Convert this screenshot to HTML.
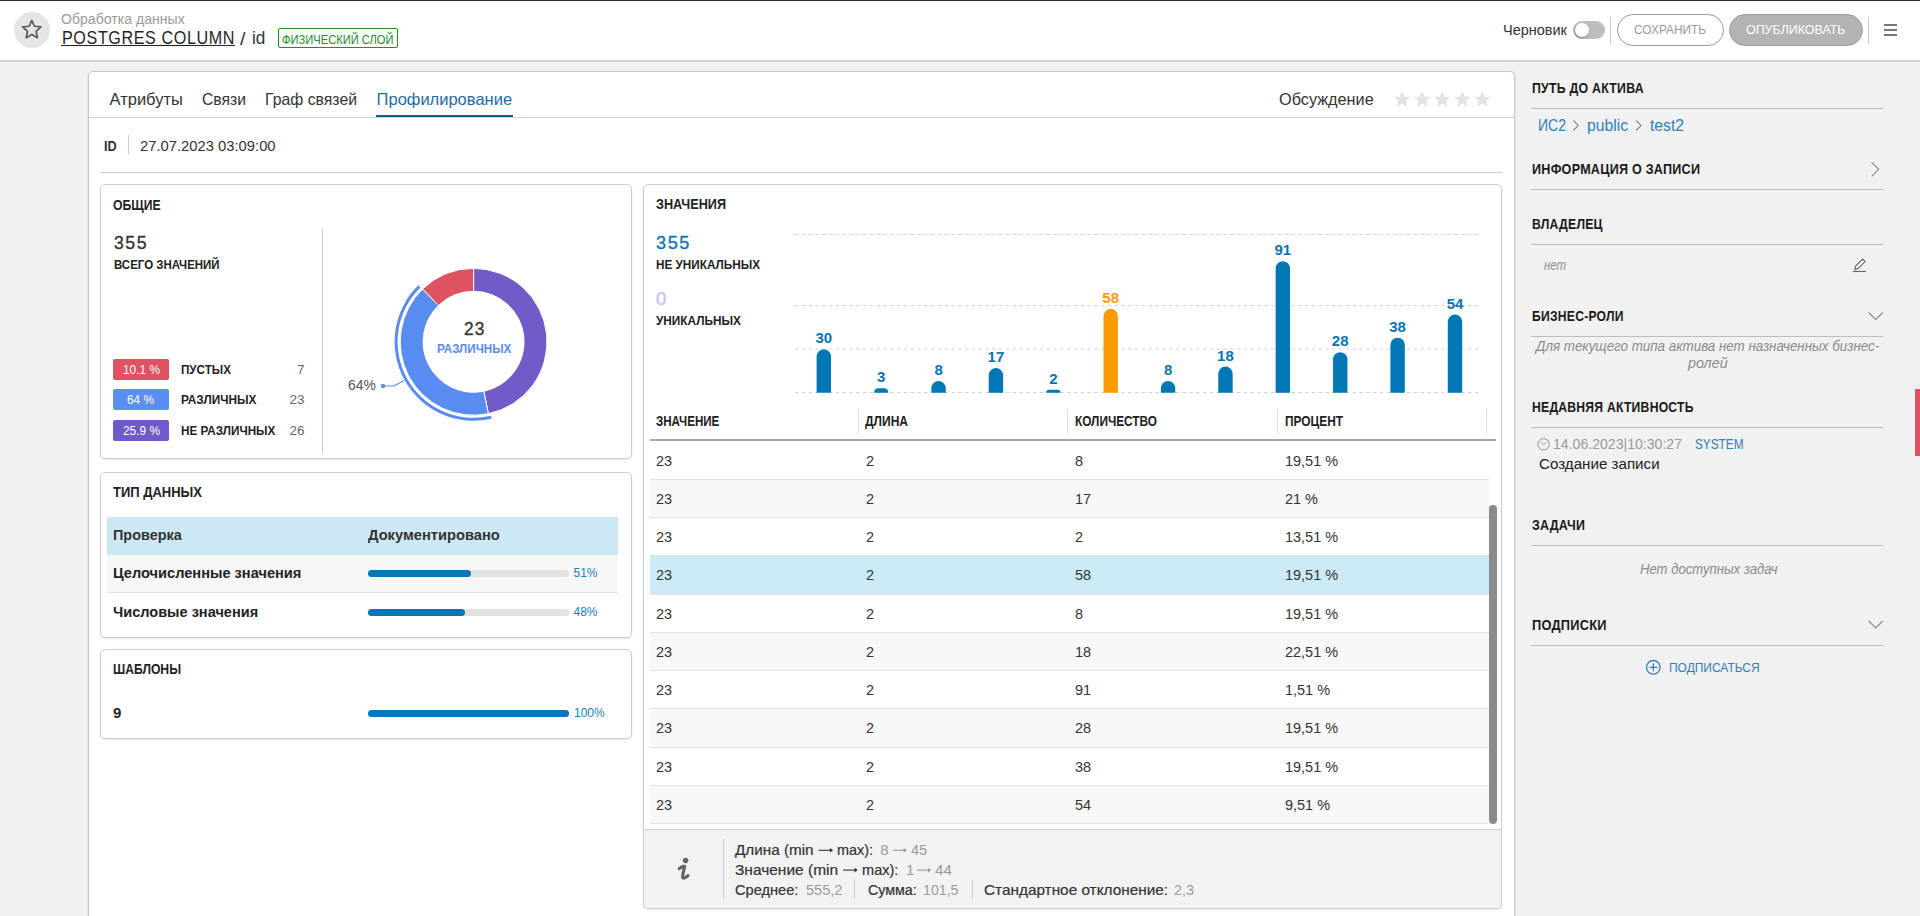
<!DOCTYPE html>
<html><head><meta charset="utf-8"><style>
html,body{margin:0;padding:0;width:1920px;height:916px;overflow:hidden;background:#f1f1f1;font-family:"Liberation Sans",sans-serif;}
.t{position:absolute;line-height:1;white-space:nowrap;transform-origin:0 0;}
.r{position:absolute;box-sizing:border-box;}
svg{position:absolute;overflow:visible;}
</style></head><body>
<div class="r" style="left:0px;top:0px;width:1920px;height:61px;background:#fff;border-top:1px solid #2b2b2b;"></div>
<div class="r" style="left:0px;top:60px;width:1920px;height:2px;background:#cfcfcf;"></div>
<svg style="left:0;top:0" width="70" height="60"><circle cx="32" cy="30" r="18" fill="#e5e5e5"/><path d="M31.80 20.30 L34.45 26.26 L40.93 26.93 L36.08 31.29 L37.44 37.67 L31.80 34.40 L26.16 37.67 L27.52 31.29 L22.67 26.93 L29.15 26.26 Z" fill="none" stroke="#5a5a5a" stroke-width="1.7" stroke-linejoin="round"/></svg>
<div class="t" style="left:61.25px;top:12.40px;font-size:14px;color:#9a9a9a;font-weight:normal;font-style:normal;transform:scaleX(1.0061);">Обработка данных</div>
<div class="t" style="left:61.50px;top:28.59px;font-size:18.5px;color:#1f1f1f;font-weight:normal;font-style:normal;transform:scaleX(0.8717);letter-spacing:0.7px;">POSTGRES COLUMN</div>
<div class="r" style="left:61px;top:44.5px;width:173.5px;height:1.6px;background:#222;"></div>
<div class="t" style="left:240.30px;top:29.74px;font-size:18.5px;color:#333;font-weight:normal;font-style:normal;transform:scaleX(1.0680);">/</div>
<div class="t" style="left:252.00px;top:29.34px;font-size:18.5px;color:#333;font-weight:normal;font-style:normal;transform:scaleX(0.9306);">id</div>
<div class="r" style="left:278px;top:28px;width:120px;height:20px;border:1.3px solid #1e8c2a;border-radius:2px;"></div>
<div class="t" style="left:282.00px;top:33.84px;font-size:12px;color:#23892f;font-weight:normal;font-style:normal;transform:scaleX(0.9296);">ФИЗИЧЕСКИЙ СЛОЙ</div>
<div class="t" style="left:1503.00px;top:22.30px;font-size:15px;color:#333;font-weight:normal;font-style:normal;transform:scaleX(0.9653);">Черновик</div>
<div class="r" style="left:1573px;top:20.8px;width:32px;height:17.8px;background:#bdbdbd;border-radius:9px;"></div>
<div class="r" style="left:1575.3px;top:22.6px;width:14.2px;height:14.2px;border-radius:50%;background:#fff;box-shadow:-0.5px 1px 2px rgba(0,0,0,.35);"></div>
<div class="r" style="left:1610px;top:17px;width:1px;height:26.7px;background:#c8c8c8;"></div>
<div class="r" style="left:1617px;top:14px;width:107px;height:32px;border:1px solid #9a9a9a;border-radius:16px;background:#fff;"></div>
<div class="t" style="left:1634.00px;top:23.07px;font-size:13.5px;color:#9a9a9a;font-weight:normal;font-style:normal;transform:scaleX(0.8780);">СОХРАНИТЬ</div>
<div class="r" style="left:1729px;top:14px;width:134px;height:32px;background:#b3b3b3;border:1px solid #9c9c9c;border-radius:16px;"></div>
<div class="t" style="left:1746.00px;top:23.07px;font-size:13.5px;color:#fff;font-weight:normal;font-style:normal;transform:scaleX(0.9209);">ОПУБЛИКОВАТЬ</div>
<div class="r" style="left:1867.8px;top:17px;width:1px;height:26.7px;background:#c8c8c8;"></div>
<div class="r" style="left:1883.5px;top:24px;width:13.5px;height:1.6px;background:#767676;"></div>
<div class="r" style="left:1883.5px;top:29px;width:13.5px;height:1.6px;background:#767676;"></div>
<div class="r" style="left:1883.5px;top:34px;width:13.5px;height:1.6px;background:#767676;"></div>
<div class="r" style="left:88px;top:71px;width:1427px;height:900px;background:#fff;border:1px solid #c9c9c9;border-radius:5px;box-shadow:0 1px 3px rgba(0,0,0,.12);"></div>
<div class="t" style="left:109.50px;top:91.03px;font-size:16.5px;color:#333;font-weight:normal;font-style:normal;">Атрибуты</div>
<div class="t" style="left:202.00px;top:91.03px;font-size:16.5px;color:#333;font-weight:normal;font-style:normal;transform:scaleX(0.9524);">Связи</div>
<div class="t" style="left:265.20px;top:91.03px;font-size:16.5px;color:#333;font-weight:normal;font-style:normal;transform:scaleX(0.9578);">Граф связей</div>
<div class="t" style="left:376.60px;top:91.03px;font-size:16.5px;color:#1f6ba6;font-weight:normal;font-style:normal;">Профилирование</div>
<div class="r" style="left:89px;top:117px;width:1425px;height:1px;background:#cfcfcf;"></div>
<div class="r" style="left:376px;top:114.6px;width:137px;height:2.5px;background:#0f5e95;"></div>
<div class="t" style="left:1279.40px;top:91.03px;font-size:16.5px;color:#333;font-weight:normal;font-style:normal;transform:scaleX(0.9849);">Обсуждение</div>
<svg style="left:1380px;top:85px" width="120" height="30"><path transform="translate(22.0,14.5)" d="M0 -8.6 L2.4 -2.8 L8.3 -2.7 L3.8 1.3 L5.3 7.5 L0 4.1 L-5.3 7.5 L-3.8 1.3 L-8.3 -2.7 L-2.4 -2.8 Z" fill="#e3e3e3"/><path transform="translate(42.1,14.5)" d="M0 -8.6 L2.4 -2.8 L8.3 -2.7 L3.8 1.3 L5.3 7.5 L0 4.1 L-5.3 7.5 L-3.8 1.3 L-8.3 -2.7 L-2.4 -2.8 Z" fill="#e3e3e3"/><path transform="translate(62.2,14.5)" d="M0 -8.6 L2.4 -2.8 L8.3 -2.7 L3.8 1.3 L5.3 7.5 L0 4.1 L-5.3 7.5 L-3.8 1.3 L-8.3 -2.7 L-2.4 -2.8 Z" fill="#e3e3e3"/><path transform="translate(82.30000000000001,14.5)" d="M0 -8.6 L2.4 -2.8 L8.3 -2.7 L3.8 1.3 L5.3 7.5 L0 4.1 L-5.3 7.5 L-3.8 1.3 L-8.3 -2.7 L-2.4 -2.8 Z" fill="#e3e3e3"/><path transform="translate(102.4,14.5)" d="M0 -8.6 L2.4 -2.8 L8.3 -2.7 L3.8 1.3 L5.3 7.5 L0 4.1 L-5.3 7.5 L-3.8 1.3 L-8.3 -2.7 L-2.4 -2.8 Z" fill="#e3e3e3"/></svg>
<div class="t" style="left:103.50px;top:137.80px;font-size:15px;color:#333;font-weight:bold;font-style:normal;transform:scaleX(0.8467);">ID</div>
<div class="r" style="left:128px;top:135px;width:1px;height:20px;background:#cfcfcf;"></div>
<div class="t" style="left:140.40px;top:137.80px;font-size:15px;color:#333;font-weight:normal;font-style:normal;transform:scaleX(0.9851);">27.07.2023 03:09:00</div>
<div class="r" style="left:100px;top:172px;width:1402px;height:1px;background:#cfcfcf;"></div>
<div class="r" style="left:100px;top:184px;width:532px;height:275px;background:#fff;border:1px solid #cdcdcd;border-radius:5px;box-shadow:0 1px 2px rgba(0,0,0,.10);"></div>
<div class="t" style="left:113.00px;top:197.08px;font-size:15.5px;color:#222;font-weight:bold;font-style:normal;transform:scaleX(0.7858);">ОБЩИЕ</div>
<div class="t" style="left:113.50px;top:233.74px;font-size:18.5px;color:#333;font-weight:normal;font-style:normal;transform:scaleX(0.9545);-webkit-text-stroke:0.35px #333;letter-spacing:1.6px;">355</div>
<div class="t" style="left:113.50px;top:258.32px;font-size:13.5px;color:#222;font-weight:bold;font-style:normal;transform:scaleX(0.8496);">ВСЕГО ЗНАЧЕНИЙ</div>
<div class="r" style="left:322px;top:229px;width:1px;height:225px;background:#cfcfcf;"></div>
<div class="r" style="left:113px;top:359px;width:56px;height:21px;background:#e05262;border-radius:2px;"></div>
<div class="t" style="left:122.52px;top:363.99px;font-size:12.3px;color:#fff;font-weight:normal;font-style:normal;transform:scaleX(0.9649);">10.1 %</div>
<div class="t" style="left:180.60px;top:362.67px;font-size:13.5px;color:#222;font-weight:bold;font-style:normal;transform:scaleX(0.8621);">ПУСТЫХ</div>
<div class="t" style="left:296.90px;top:362.67px;font-size:13.5px;color:#666;font-weight:normal;font-style:normal;">7</div>
<div class="r" style="left:113px;top:389px;width:56px;height:21px;background:#5a8ef0;border-radius:2px;"></div>
<div class="t" style="left:127.46px;top:393.99px;font-size:12.3px;color:#fff;font-weight:normal;font-style:normal;transform:scaleX(0.9652);">64 %</div>
<div class="t" style="left:180.60px;top:392.67px;font-size:13.5px;color:#222;font-weight:bold;font-style:normal;transform:scaleX(0.8737);">РАЗЛИЧНЫХ</div>
<div class="t" style="left:289.40px;top:392.67px;font-size:13.5px;color:#666;font-weight:normal;font-style:normal;">23</div>
<div class="r" style="left:113px;top:420px;width:56px;height:21px;background:#7059c8;border-radius:2px;"></div>
<div class="t" style="left:122.52px;top:424.99px;font-size:12.3px;color:#fff;font-weight:normal;font-style:normal;transform:scaleX(0.9649);">25.9 %</div>
<div class="t" style="left:180.60px;top:423.67px;font-size:13.5px;color:#222;font-weight:bold;font-style:normal;transform:scaleX(0.8672);">НЕ РАЗЛИЧНЫХ</div>
<div class="t" style="left:289.40px;top:423.67px;font-size:13.5px;color:#666;font-weight:normal;font-style:normal;">26</div>
<svg style="left:0;top:0" width="640" height="460"><path d="M473.60 268.40 A73.4 73.4 0 0 1 488.36 413.70 L483.75 391.27 A50.5 50.5 0 0 0 473.60 291.30 Z" fill="#715bc9" stroke="#fff" stroke-width="1"/><path d="M488.36 413.70 A73.4 73.4 0 0 1 422.61 289.00 L438.52 305.47 A50.5 50.5 0 0 0 483.75 391.27 Z" fill="#598cf0" stroke="#fff" stroke-width="1"/><path d="M422.61 289.00 A73.4 73.4 0 0 1 473.60 268.40 L473.60 291.30 A50.5 50.5 0 0 0 438.52 305.47 Z" fill="#de5261" stroke="#fff" stroke-width="1"/><path d="M491.64 418.71 A79 79 0 0 1 418.33 285.36 L420.43 287.50 A76 76 0 0 0 490.95 415.79 Z" fill="#598cf0" /><circle cx="383" cy="386" r="2.2" fill="#598cf0"/><path d="M383 386 L394 386 L404 380.5" fill="none" stroke="#598cf0" stroke-width="1.2"/></svg>
<div class="t" style="left:348.40px;top:377.73px;font-size:14.5px;color:#555;font-weight:normal;font-style:normal;transform:scaleX(0.9586);">64%</div>
<div class="t" style="left:463.50px;top:321.19px;font-size:17.5px;color:#333;font-weight:normal;font-style:normal;transform:scaleX(0.9879);-webkit-text-stroke:0.35px #333;letter-spacing:1.2px;">23</div>
<div class="t" style="left:436.50px;top:342.37px;font-size:13.5px;color:#598cf0;font-weight:bold;font-style:normal;transform:scaleX(0.8610);">РАЗЛИЧНЫХ</div>
<div class="r" style="left:100px;top:472px;width:532px;height:166px;background:#fff;border:1px solid #cdcdcd;border-radius:5px;box-shadow:0 1px 2px rgba(0,0,0,.10);"></div>
<div class="t" style="left:113.00px;top:483.68px;font-size:15.5px;color:#222;font-weight:bold;font-style:normal;transform:scaleX(0.8380);">ТИП ДАННЫХ</div>
<div class="r" style="left:107px;top:517px;width:511px;height:38px;background:#cde8f5;"></div>
<div class="t" style="left:113.00px;top:526.90px;font-size:15px;color:#333;font-weight:bold;font-style:normal;transform:scaleX(0.9609);">Проверка</div>
<div class="t" style="left:367.80px;top:526.90px;font-size:15px;color:#333;font-weight:bold;font-style:normal;transform:scaleX(0.9781);">Документировано</div>
<div class="r" style="left:107px;top:555px;width:511px;height:38px;background:#f7f7f7;border-bottom:1px solid #e3e3e3;"></div>
<div class="t" style="left:113.00px;top:565.30px;font-size:15px;color:#222;font-weight:bold;font-style:normal;transform:scaleX(0.9729);">Целочисленные значения</div>
<div class="r" style="left:368px;top:569.5px;width:201px;height:7px;background:#e2e2e2;border-radius:4px;"></div>
<div class="r" style="left:368px;top:569.5px;width:103px;height:7px;background:#0a76b7;border-radius:4px;"></div>
<div class="t" style="left:573.50px;top:566.84px;font-size:12px;color:#1c7dbd;font-weight:normal;font-style:normal;">51%</div>
<div class="t" style="left:113.00px;top:603.70px;font-size:15px;color:#222;font-weight:bold;font-style:normal;transform:scaleX(0.9693);">Числовые значения</div>
<div class="r" style="left:368px;top:609px;width:201px;height:7px;background:#e2e2e2;border-radius:4px;"></div>
<div class="r" style="left:368px;top:609px;width:97px;height:7px;background:#0a76b7;border-radius:4px;"></div>
<div class="t" style="left:573.50px;top:606.34px;font-size:12px;color:#1c7dbd;font-weight:normal;font-style:normal;">48%</div>
<div class="r" style="left:100px;top:649px;width:532px;height:90px;background:#fff;border:1px solid #cdcdcd;border-radius:5px;box-shadow:0 1px 2px rgba(0,0,0,.10);"></div>
<div class="t" style="left:113.00px;top:661.48px;font-size:15.5px;color:#222;font-weight:bold;font-style:normal;transform:scaleX(0.7834);">ШАБЛОНЫ</div>
<div class="t" style="left:113.00px;top:704.70px;font-size:15px;color:#222;font-weight:bold;font-style:normal;">9</div>
<div class="r" style="left:368px;top:709.5px;width:201px;height:7px;background:#0a76b7;border-radius:4px;"></div>
<div class="t" style="left:574.00px;top:706.84px;font-size:12px;color:#1c7dbd;font-weight:normal;font-style:normal;">100%</div>
<div class="r" style="left:643px;top:184px;width:859px;height:725px;background:#fff;border:1px solid #cdcdcd;border-radius:5px;box-shadow:0 1px 2px rgba(0,0,0,.10);overflow:hidden;"></div>
<div class="t" style="left:655.50px;top:196.38px;font-size:15.5px;color:#222;font-weight:bold;font-style:normal;transform:scaleX(0.8178);">ЗНАЧЕНИЯ</div>
<div class="t" style="left:655.50px;top:233.64px;font-size:18.5px;color:#0a76b7;font-weight:normal;font-style:normal;transform:scaleX(0.9780);-webkit-text-stroke:0.35px #0a76b7;letter-spacing:1.6px;">355</div>
<div class="t" style="left:655.50px;top:257.87px;font-size:13.5px;color:#222;font-weight:bold;font-style:normal;transform:scaleX(0.8692);">НЕ УНИКАЛЬНЫХ</div>
<div class="t" style="left:656.00px;top:289.64px;font-size:18.5px;color:#c9c5f2;font-weight:normal;font-style:normal;-webkit-text-stroke:0.5px #c9c5f2;">0</div>
<div class="t" style="left:655.50px;top:313.87px;font-size:13.5px;color:#222;font-weight:bold;font-style:normal;transform:scaleX(0.8739);">УНИКАЛЬНЫХ</div>
<svg style="left:0;top:0" width="1600" height="460"><line x1="795" y1="234.5" x2="1482" y2="234.5" stroke="#d2d2d2" stroke-width="1.2" stroke-dasharray="3.4 3.4"/><line x1="795" y1="305.5" x2="1482" y2="305.5" stroke="#d2d2d2" stroke-width="1.2" stroke-dasharray="3.4 3.4"/><line x1="795" y1="349" x2="1482" y2="349" stroke="#d2d2d2" stroke-width="1.2" stroke-dasharray="3.4 3.4"/><line x1="795" y1="392.5" x2="1482" y2="392.5" stroke="#d2d2d2" stroke-width="1.2" stroke-dasharray="3.4 3.4"/><path d="M816.60 392.8 L816.60 356.48 A7.20 7.20 0 0 1 823.80 349.28 L823.80 349.28 A7.20 7.20 0 0 1 831.00 356.48 L831.00 392.8 Z" fill="#0277b6"/><path d="M873.98 392.8 L873.98 392.60 A4.33 4.33 0 0 1 878.31 388.27 L884.05 388.27 A4.33 4.33 0 0 1 888.38 392.60 L888.38 392.8 Z" fill="#0277b6"/><path d="M931.36 392.8 L931.36 388.25 A7.20 7.20 0 0 1 938.56 381.05 L938.56 381.05 A7.20 7.20 0 0 1 945.76 388.25 L945.76 392.8 Z" fill="#0277b6"/><path d="M988.74 392.8 L988.74 375.25 A7.20 7.20 0 0 1 995.94 368.05 L995.94 368.05 A7.20 7.20 0 0 1 1003.14 375.25 L1003.14 392.8 Z" fill="#0277b6"/><path d="M1046.12 392.8 L1046.12 392.60 A2.89 2.89 0 0 1 1049.01 389.71 L1057.63 389.71 A2.89 2.89 0 0 1 1060.52 392.60 L1060.52 392.8 Z" fill="#0277b6"/><path d="M1103.50 392.8 L1103.50 316.05 A7.20 7.20 0 0 1 1110.70 308.85 L1110.70 308.85 A7.20 7.20 0 0 1 1117.90 316.05 L1117.90 392.8 Z" fill="#ff9a00"/><path d="M1160.88 392.8 L1160.88 388.25 A7.20 7.20 0 0 1 1168.08 381.05 L1168.08 381.05 A7.20 7.20 0 0 1 1175.28 388.25 L1175.28 392.8 Z" fill="#0277b6"/><path d="M1218.26 392.8 L1218.26 373.81 A7.20 7.20 0 0 1 1225.46 366.61 L1225.46 366.61 A7.20 7.20 0 0 1 1232.66 373.81 L1232.66 392.8 Z" fill="#0277b6"/><path d="M1275.64 392.8 L1275.64 268.40 A7.20 7.20 0 0 1 1282.84 261.20 L1282.84 261.20 A7.20 7.20 0 0 1 1290.04 268.40 L1290.04 392.8 Z" fill="#0277b6"/><path d="M1333.02 392.8 L1333.02 359.37 A7.20 7.20 0 0 1 1340.22 352.17 L1340.22 352.17 A7.20 7.20 0 0 1 1347.42 359.37 L1347.42 392.8 Z" fill="#0277b6"/><path d="M1390.40 392.8 L1390.40 344.93 A7.20 7.20 0 0 1 1397.60 337.73 L1397.60 337.73 A7.20 7.20 0 0 1 1404.80 344.93 L1404.80 392.8 Z" fill="#0277b6"/><path d="M1447.78 392.8 L1447.78 321.82 A7.20 7.20 0 0 1 1454.98 314.62 L1454.98 314.62 A7.20 7.20 0 0 1 1462.18 321.82 L1462.18 392.8 Z" fill="#0277b6"/></svg>
<div class="t" style="left:815.45px;top:330.38px;font-size:15px;color:#0a73b2;font-weight:bold;font-style:normal;">30</div>
<div class="t" style="left:877.00px;top:369.37px;font-size:15px;color:#0a73b2;font-weight:bold;font-style:normal;">3</div>
<div class="t" style="left:934.38px;top:362.15px;font-size:15px;color:#0a73b2;font-weight:bold;font-style:normal;">8</div>
<div class="t" style="left:987.59px;top:349.15px;font-size:15px;color:#0a73b2;font-weight:bold;font-style:normal;">17</div>
<div class="t" style="left:1049.14px;top:370.81px;font-size:15px;color:#0a73b2;font-weight:bold;font-style:normal;">2</div>
<div class="t" style="left:1102.35px;top:289.95px;font-size:15px;color:#ff9a00;font-weight:bold;font-style:normal;">58</div>
<div class="t" style="left:1163.90px;top:362.15px;font-size:15px;color:#0a73b2;font-weight:bold;font-style:normal;">8</div>
<div class="t" style="left:1217.11px;top:347.71px;font-size:15px;color:#0a73b2;font-weight:bold;font-style:normal;">18</div>
<div class="t" style="left:1274.49px;top:242.30px;font-size:15px;color:#0a73b2;font-weight:bold;font-style:normal;">91</div>
<div class="t" style="left:1331.87px;top:333.27px;font-size:15px;color:#0a73b2;font-weight:bold;font-style:normal;">28</div>
<div class="t" style="left:1389.25px;top:318.83px;font-size:15px;color:#0a73b2;font-weight:bold;font-style:normal;">38</div>
<div class="t" style="left:1446.63px;top:295.73px;font-size:15px;color:#0a73b2;font-weight:bold;font-style:normal;">54</div>
<div class="t" style="left:655.60px;top:413.73px;font-size:14.5px;color:#222;font-weight:bold;font-style:normal;transform:scaleX(0.7977);">ЗНАЧЕНИЕ</div>
<div class="t" style="left:865.00px;top:413.73px;font-size:14.5px;color:#222;font-weight:bold;font-style:normal;transform:scaleX(0.8293);">ДЛИНА</div>
<div class="t" style="left:1074.50px;top:413.73px;font-size:14.5px;color:#222;font-weight:bold;font-style:normal;transform:scaleX(0.8151);">КОЛИЧЕСТВО</div>
<div class="t" style="left:1284.50px;top:413.73px;font-size:14.5px;color:#222;font-weight:bold;font-style:normal;transform:scaleX(0.8198);">ПРОЦЕНТ</div>
<div class="r" style="left:857.5px;top:409px;width:1px;height:25px;background:#dedede;"></div>
<div class="r" style="left:1067px;top:409px;width:1px;height:25px;background:#dedede;"></div>
<div class="r" style="left:1276.5px;top:409px;width:1px;height:25px;background:#dedede;"></div>
<div class="r" style="left:1486px;top:409px;width:1px;height:25px;background:#dedede;"></div>
<div class="r" style="left:650px;top:438.8px;width:846px;height:2.3px;background:#a9a9a9;"></div>
<div class="r" style="left:650px;top:441.5px;width:839px;height:38.3px;background:#fff;"></div>
<div class="t" style="left:655.80px;top:452.90px;font-size:15px;color:#333;font-weight:normal;font-style:normal;transform:scaleX(0.9650);">23</div>
<div class="t" style="left:865.60px;top:452.90px;font-size:15px;color:#333;font-weight:normal;font-style:normal;transform:scaleX(0.9650);">2</div>
<div class="t" style="left:1074.70px;top:452.90px;font-size:15px;color:#333;font-weight:normal;font-style:normal;transform:scaleX(0.9650);">8</div>
<div class="t" style="left:1285.00px;top:452.90px;font-size:15px;color:#333;font-weight:normal;font-style:normal;transform:scaleX(0.9650);">19,51 %</div>
<div class="r" style="left:650px;top:479.4px;width:839px;height:38.4px;background:#f8f8f8;"></div>
<div class="t" style="left:655.80px;top:490.80px;font-size:15px;color:#333;font-weight:normal;font-style:normal;transform:scaleX(0.9650);">23</div>
<div class="t" style="left:865.60px;top:490.80px;font-size:15px;color:#333;font-weight:normal;font-style:normal;transform:scaleX(0.9650);">2</div>
<div class="t" style="left:1074.70px;top:490.80px;font-size:15px;color:#333;font-weight:normal;font-style:normal;transform:scaleX(0.9650);">17</div>
<div class="t" style="left:1285.00px;top:490.80px;font-size:15px;color:#333;font-weight:normal;font-style:normal;transform:scaleX(0.9650);">21 %</div>
<div class="r" style="left:650px;top:517.4px;width:839px;height:38.6px;background:#fff;"></div>
<div class="t" style="left:655.80px;top:528.80px;font-size:15px;color:#333;font-weight:normal;font-style:normal;transform:scaleX(0.9650);">23</div>
<div class="t" style="left:865.60px;top:528.80px;font-size:15px;color:#333;font-weight:normal;font-style:normal;transform:scaleX(0.9650);">2</div>
<div class="t" style="left:1074.70px;top:528.80px;font-size:15px;color:#333;font-weight:normal;font-style:normal;transform:scaleX(0.9650);">2</div>
<div class="t" style="left:1285.00px;top:528.80px;font-size:15px;color:#333;font-weight:normal;font-style:normal;transform:scaleX(0.9650);">13,51 %</div>
<div class="r" style="left:650px;top:555.6px;width:839px;height:39.1px;background:#cce9f6;"></div>
<div class="t" style="left:655.80px;top:567.00px;font-size:15px;color:#333;font-weight:normal;font-style:normal;transform:scaleX(0.9650);">23</div>
<div class="t" style="left:865.60px;top:567.00px;font-size:15px;color:#333;font-weight:normal;font-style:normal;transform:scaleX(0.9650);">2</div>
<div class="t" style="left:1074.70px;top:567.00px;font-size:15px;color:#333;font-weight:normal;font-style:normal;transform:scaleX(0.9650);">58</div>
<div class="t" style="left:1285.00px;top:567.00px;font-size:15px;color:#333;font-weight:normal;font-style:normal;transform:scaleX(0.9650);">19,51 %</div>
<div class="r" style="left:650px;top:594.3px;width:839px;height:38.4px;background:#fff;"></div>
<div class="t" style="left:655.80px;top:605.70px;font-size:15px;color:#333;font-weight:normal;font-style:normal;transform:scaleX(0.9650);">23</div>
<div class="t" style="left:865.60px;top:605.70px;font-size:15px;color:#333;font-weight:normal;font-style:normal;transform:scaleX(0.9650);">2</div>
<div class="t" style="left:1074.70px;top:605.70px;font-size:15px;color:#333;font-weight:normal;font-style:normal;transform:scaleX(0.9650);">8</div>
<div class="t" style="left:1285.00px;top:605.70px;font-size:15px;color:#333;font-weight:normal;font-style:normal;transform:scaleX(0.9650);">19,51 %</div>
<div class="r" style="left:650px;top:632.3px;width:839px;height:38.3px;background:#f8f8f8;"></div>
<div class="t" style="left:655.80px;top:643.70px;font-size:15px;color:#333;font-weight:normal;font-style:normal;transform:scaleX(0.9650);">23</div>
<div class="t" style="left:865.60px;top:643.70px;font-size:15px;color:#333;font-weight:normal;font-style:normal;transform:scaleX(0.9650);">2</div>
<div class="t" style="left:1074.70px;top:643.70px;font-size:15px;color:#333;font-weight:normal;font-style:normal;transform:scaleX(0.9650);">18</div>
<div class="t" style="left:1285.00px;top:643.70px;font-size:15px;color:#333;font-weight:normal;font-style:normal;transform:scaleX(0.9650);">22,51 %</div>
<div class="r" style="left:650px;top:670.2px;width:839px;height:38.3px;background:#fff;"></div>
<div class="t" style="left:655.80px;top:681.60px;font-size:15px;color:#333;font-weight:normal;font-style:normal;transform:scaleX(0.9650);">23</div>
<div class="t" style="left:865.60px;top:681.60px;font-size:15px;color:#333;font-weight:normal;font-style:normal;transform:scaleX(0.9650);">2</div>
<div class="t" style="left:1074.70px;top:681.60px;font-size:15px;color:#333;font-weight:normal;font-style:normal;transform:scaleX(0.9650);">91</div>
<div class="t" style="left:1285.00px;top:681.60px;font-size:15px;color:#333;font-weight:normal;font-style:normal;transform:scaleX(0.9650);">1,51 %</div>
<div class="r" style="left:650px;top:708.1px;width:839px;height:39.6px;background:#f8f8f8;"></div>
<div class="t" style="left:655.80px;top:719.50px;font-size:15px;color:#333;font-weight:normal;font-style:normal;transform:scaleX(0.9650);">23</div>
<div class="t" style="left:865.60px;top:719.50px;font-size:15px;color:#333;font-weight:normal;font-style:normal;transform:scaleX(0.9650);">2</div>
<div class="t" style="left:1074.70px;top:719.50px;font-size:15px;color:#333;font-weight:normal;font-style:normal;transform:scaleX(0.9650);">28</div>
<div class="t" style="left:1285.00px;top:719.50px;font-size:15px;color:#333;font-weight:normal;font-style:normal;transform:scaleX(0.9650);">19,51 %</div>
<div class="r" style="left:650px;top:747.3px;width:839px;height:38.6px;background:#fff;"></div>
<div class="t" style="left:655.80px;top:758.70px;font-size:15px;color:#333;font-weight:normal;font-style:normal;transform:scaleX(0.9650);">23</div>
<div class="t" style="left:865.60px;top:758.70px;font-size:15px;color:#333;font-weight:normal;font-style:normal;transform:scaleX(0.9650);">2</div>
<div class="t" style="left:1074.70px;top:758.70px;font-size:15px;color:#333;font-weight:normal;font-style:normal;transform:scaleX(0.9650);">38</div>
<div class="t" style="left:1285.00px;top:758.70px;font-size:15px;color:#333;font-weight:normal;font-style:normal;transform:scaleX(0.9650);">19,51 %</div>
<div class="r" style="left:650px;top:785.5px;width:839px;height:38.2px;background:#f8f8f8;"></div>
<div class="t" style="left:655.80px;top:796.90px;font-size:15px;color:#333;font-weight:normal;font-style:normal;transform:scaleX(0.9650);">23</div>
<div class="t" style="left:865.60px;top:796.90px;font-size:15px;color:#333;font-weight:normal;font-style:normal;transform:scaleX(0.9650);">2</div>
<div class="t" style="left:1074.70px;top:796.90px;font-size:15px;color:#333;font-weight:normal;font-style:normal;transform:scaleX(0.9650);">54</div>
<div class="t" style="left:1285.00px;top:796.90px;font-size:15px;color:#333;font-weight:normal;font-style:normal;transform:scaleX(0.9650);">9,51 %</div>
<div class="r" style="left:650px;top:478.9px;width:839px;height:1px;background:#e2e2e2;"></div>
<div class="r" style="left:650px;top:516.9px;width:839px;height:1px;background:#e2e2e2;"></div>
<div class="r" style="left:650px;top:555.1px;width:839px;height:1px;background:#e2e2e2;"></div>
<div class="r" style="left:650px;top:593.8px;width:839px;height:1px;background:#e2e2e2;"></div>
<div class="r" style="left:650px;top:631.8px;width:839px;height:1px;background:#e2e2e2;"></div>
<div class="r" style="left:650px;top:669.7px;width:839px;height:1px;background:#e2e2e2;"></div>
<div class="r" style="left:650px;top:707.6px;width:839px;height:1px;background:#e2e2e2;"></div>
<div class="r" style="left:650px;top:746.8px;width:839px;height:1px;background:#e2e2e2;"></div>
<div class="r" style="left:650px;top:785.0px;width:839px;height:1px;background:#e2e2e2;"></div>
<div class="r" style="left:650px;top:822.8px;width:839px;height:1px;background:#e2e2e2;"></div>
<div class="r" style="left:1489px;top:505px;width:7.5px;height:318.5px;background:#8a8a8a;border-radius:4px;"></div>
<div class="r" style="left:644px;top:829px;width:857px;height:79px;background:#f2f2f2;border-top:1px solid #cfcfcf;border-radius:0 0 5px 5px;"></div>
<svg style="left:0;top:0" width="760" height="916"><circle cx="685.6" cy="860.5" r="2.7" fill="#626262"/><path d="M679.2 868.6 Q681.6 866.2 684.6 866.4 L682.6 876 Q682.2 878.6 684.6 877.9 Q686.4 877.2 688 875.6" fill="none" stroke="#626262" stroke-width="3.1" stroke-linecap="round" stroke-linejoin="round"/></svg>
<div class="r" style="left:723px;top:839px;width:1px;height:60px;background:#cfcfcf;"></div>
<div class="t" style="left:735.30px;top:842.30px;font-size:15px;color:#333;font-weight:normal;font-style:normal;transform:scaleX(1.0175);-webkit-text-stroke:0.2px #333;">Длина (min</div>
<div class="t" style="left:837.30px;top:842.30px;font-size:15px;color:#333;font-weight:normal;font-style:normal;transform:scaleX(0.9600);-webkit-text-stroke:0.2px #333;">max):</div>
<div class="t" style="left:880.30px;top:842.30px;font-size:15px;color:#9a9a9a;font-weight:normal;font-style:normal;">8</div>
<div class="t" style="left:910.80px;top:842.30px;font-size:15px;color:#9a9a9a;font-weight:normal;font-style:normal;transform:scaleX(0.9641);">45</div>
<div class="t" style="left:735.30px;top:862.10px;font-size:15px;color:#333;font-weight:normal;font-style:normal;transform:scaleX(1.0325);-webkit-text-stroke:0.2px #333;">Значение (min</div>
<div class="t" style="left:861.90px;top:862.10px;font-size:15px;color:#333;font-weight:normal;font-style:normal;transform:scaleX(0.9707);-webkit-text-stroke:0.2px #333;">max):</div>
<div class="t" style="left:906.10px;top:862.10px;font-size:15px;color:#9a9a9a;font-weight:normal;font-style:normal;">1</div>
<div class="t" style="left:935.30px;top:862.10px;font-size:15px;color:#9a9a9a;font-weight:normal;font-style:normal;transform:scaleX(1.0120);">44</div>
<div class="t" style="left:735.30px;top:882.10px;font-size:15px;color:#333;font-weight:normal;font-style:normal;transform:scaleX(0.9747);-webkit-text-stroke:0.2px #333;">Среднее:</div>
<div class="t" style="left:805.60px;top:882.10px;font-size:15px;color:#9a9a9a;font-weight:normal;font-style:normal;transform:scaleX(0.9694);">555,2</div>
<div class="r" style="left:854px;top:879.5px;width:1px;height:19.5px;background:#cfcfcf;"></div>
<div class="t" style="left:867.50px;top:882.10px;font-size:15px;color:#333;font-weight:normal;font-style:normal;transform:scaleX(0.9503);-webkit-text-stroke:0.2px #333;">Сумма:</div>
<div class="t" style="left:923.30px;top:882.10px;font-size:15px;color:#9a9a9a;font-weight:normal;font-style:normal;transform:scaleX(0.9454);">101,5</div>
<div class="r" style="left:972px;top:879.5px;width:1px;height:19.5px;background:#cfcfcf;"></div>
<div class="t" style="left:984.30px;top:882.10px;font-size:15px;color:#333;font-weight:normal;font-style:normal;transform:scaleX(1.0225);-webkit-text-stroke:0.2px #333;">Стандартное отклонение:</div>
<div class="t" style="left:1174.00px;top:882.10px;font-size:15px;color:#9a9a9a;font-weight:normal;font-style:normal;transform:scaleX(0.9592);">2,3</div>
<svg style="left:0;top:0" width="1600" height="916"><path d="M818.6 850.3 H832.1" stroke="#333" stroke-width="1.1"/><path d="M829.9 848.0 L833.1 850.3 L829.9 852.5999999999999 Z" fill="#333"/><path d="M892.8 850.3 H905.9" stroke="#9a9a9a" stroke-width="1.1"/><path d="M903.6999999999999 848.0 L906.9 850.3 L903.6999999999999 852.5999999999999 Z" fill="#9a9a9a"/><path d="M843.1 870.1 H856.7" stroke="#333" stroke-width="1.1"/><path d="M854.5 867.8000000000001 L857.7 870.1 L854.5 872.4 Z" fill="#333"/><path d="M917 870.1 H930.1" stroke="#9a9a9a" stroke-width="1.1"/><path d="M927.9 867.8000000000001 L931.1 870.1 L927.9 872.4 Z" fill="#9a9a9a"/></svg>
<div class="t" style="left:1531.50px;top:80.08px;font-size:15.5px;color:#1a1a1a;font-weight:bold;font-style:normal;transform:scaleX(0.7957);letter-spacing:0.3px;">ПУТЬ ДО АКТИВА</div>
<div class="r" style="left:1531px;top:108px;width:352px;height:1px;background:#bdbdbd;"></div>
<div class="t" style="left:1537.50px;top:117.76px;font-size:16px;color:#2f7fb9;font-weight:normal;font-style:normal;transform:scaleX(0.8764);">ИС2</div>
<div class="t" style="left:1587.30px;top:117.76px;font-size:16px;color:#2f7fb9;font-weight:normal;font-style:normal;transform:scaleX(0.9809);">public</div>
<div class="t" style="left:1649.60px;top:117.76px;font-size:16px;color:#2f7fb9;font-weight:normal;font-style:normal;transform:scaleX(0.9798);">test2</div>
<svg style="left:0;top:0" width="1920" height="916"><path d="M1573.3 120.5 L1578.3 125.5 L1573.3 130.5" fill="none" stroke="#8a8a8a" stroke-width="1.1"/><path d="M1636.1 120.5 L1641.1 125.5 L1636.1 130.5" fill="none" stroke="#8a8a8a" stroke-width="1.1"/><path d="M1871.6 162.2 L1878.6 169.3 L1871.6 176.4" fill="none" stroke="#858585" stroke-width="1.1"/><path d="M1868.7 312.5 L1875.7 319.5 L1882.7 312.5" fill="none" stroke="#8a8a8a" stroke-width="1.1"/><path d="M1868.7 621.0 L1875.7 628.0 L1882.7 621.0" fill="none" stroke="#8a8a8a" stroke-width="1.1"/><path d="M1854.8 269.6 L1855.6 266.1 L1862.6 259.1 L1865.1 261.6 L1858.1 268.6 Z" fill="none" stroke="#666" stroke-width="1.1"/><line x1="1852.8" y1="271.5" x2="1866" y2="271.5" stroke="#666" stroke-width="1.1"/><circle cx="1543.6" cy="444.3" r="5.7" fill="none" stroke="#8f8f8f" stroke-width="1"/><path d="M1541 442.3 L1543.6 444.6 L1546.6 442.3" fill="none" stroke="#9a9a9a" stroke-width="1"/><circle cx="1653.3" cy="667.3" r="6.8" fill="none" stroke="#2f7fb9" stroke-width="1.3"/><path d="M1653.3 663.3 V671.3 M1649.3 667.3 H1657.3" stroke="#2f7fb9" stroke-width="1.3"/></svg>
<div class="t" style="left:1531.50px;top:160.58px;font-size:15.5px;color:#1a1a1a;font-weight:bold;font-style:normal;transform:scaleX(0.8122);letter-spacing:0.3px;">ИНФОРМАЦИЯ О ЗАПИСИ</div>
<div class="r" style="left:1531px;top:189px;width:352px;height:1px;background:#bdbdbd;"></div>
<div class="t" style="left:1531.50px;top:216.38px;font-size:15.5px;color:#1a1a1a;font-weight:bold;font-style:normal;transform:scaleX(0.7881);letter-spacing:0.3px;">ВЛАДЕЛЕЦ</div>
<div class="r" style="left:1531px;top:244px;width:352px;height:1px;background:#bdbdbd;"></div>
<div class="t" style="left:1543.50px;top:256.90px;font-size:15px;color:#8f8f8f;font-weight:normal;font-style:italic;transform:scaleX(0.7612);">нет</div>
<div class="t" style="left:1531.50px;top:308.18px;font-size:15.5px;color:#1a1a1a;font-weight:bold;font-style:normal;transform:scaleX(0.7841);letter-spacing:0.3px;">БИЗНЕС-РОЛИ</div>
<div class="r" style="left:1531px;top:336px;width:352px;height:1px;background:#bdbdbd;"></div>
<div class="t" style="left:1536.44px;top:338.53px;font-size:14.5px;color:#8a8a8a;font-weight:normal;font-style:italic;transform:scaleX(0.9210);">Для текущего типа актива нет назначенных бизнес-</div>
<div class="t" style="left:1688.40px;top:355.73px;font-size:14.5px;color:#8a8a8a;font-weight:normal;font-style:italic;transform:scaleX(0.9877);">ролей</div>
<div class="t" style="left:1531.50px;top:399.48px;font-size:15.5px;color:#1a1a1a;font-weight:bold;font-style:normal;transform:scaleX(0.7853);letter-spacing:0.3px;">НЕДАВНЯЯ АКТИВНОСТЬ</div>
<div class="r" style="left:1531px;top:427px;width:352px;height:1px;background:#bdbdbd;"></div>
<div class="t" style="left:1553.10px;top:436.85px;font-size:14px;color:#9a9a9a;font-weight:normal;font-style:normal;transform:scaleX(1.0062);">14.06.2023|10:30:27</div>
<div class="t" style="left:1694.60px;top:436.85px;font-size:14px;color:#2f7fb9;font-weight:normal;font-style:normal;transform:scaleX(0.8427);">SYSTEM</div>
<div class="t" style="left:1538.70px;top:455.78px;font-size:15.5px;color:#222;font-weight:normal;font-style:normal;transform:scaleX(0.9773);">Создание записи</div>
<div class="r" style="left:1914.7px;top:388.6px;width:5.3px;height:67.6px;background:#e05262;"></div>
<div class="t" style="left:1531.50px;top:517.38px;font-size:15.5px;color:#1a1a1a;font-weight:bold;font-style:normal;transform:scaleX(0.8024);letter-spacing:0.3px;">ЗАДАЧИ</div>
<div class="r" style="left:1531px;top:545px;width:352px;height:1px;background:#bdbdbd;"></div>
<div class="t" style="left:1639.60px;top:562.13px;font-size:14.5px;color:#8a8a8a;font-weight:normal;font-style:italic;transform:scaleX(0.9046);">Нет доступных задач</div>
<div class="t" style="left:1531.50px;top:617.08px;font-size:15.5px;color:#1a1a1a;font-weight:bold;font-style:normal;transform:scaleX(0.8259);letter-spacing:0.3px;">ПОДПИСКИ</div>
<div class="r" style="left:1531px;top:645px;width:352px;height:1px;background:#bdbdbd;"></div>
<div class="t" style="left:1668.90px;top:661.37px;font-size:13.5px;color:#2f7fb9;font-weight:normal;font-style:normal;transform:scaleX(0.8869);">ПОДПИСАТЬСЯ</div>
</body></html>
